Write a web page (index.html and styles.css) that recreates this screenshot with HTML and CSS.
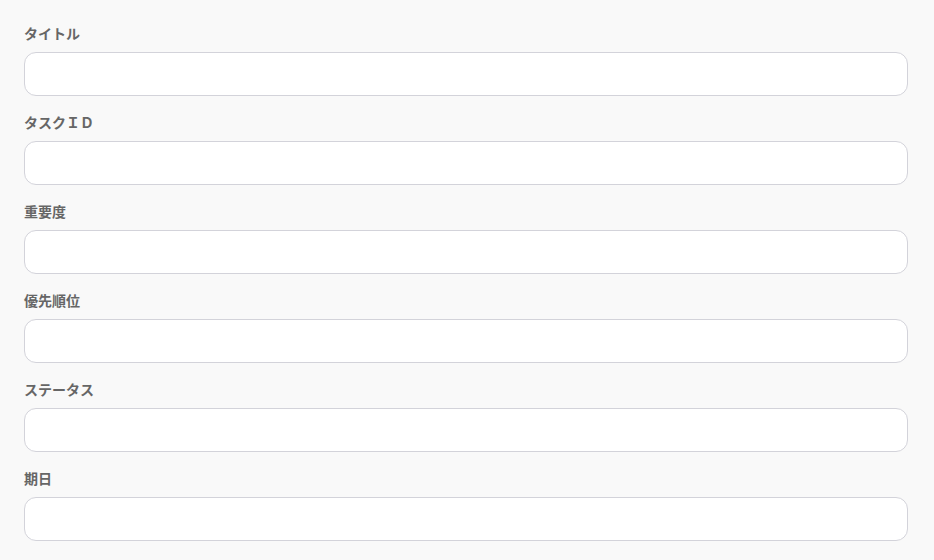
FILE: index.html
```html
<!DOCTYPE html>
<html lang="ja">
<head>
<meta charset="utf-8">
<link rel="stylesheet" href="styles.css">
</head>
<body>
<form class="form">
  <div class="field"><label class="label">タイトル</label><input class="input" type="text"></div>
  <div class="field"><label class="label">タスクＩＤ</label><input class="input" type="text"></div>
  <div class="field"><label class="label">重要度</label><input class="input" type="text"></div>
  <div class="field"><label class="label">優先順位</label><input class="input" type="text"></div>
  <div class="field"><label class="label">ステータス</label><input class="input" type="text"></div>
  <div class="field"><label class="label">期日</label><input class="input" type="text"></div>
</form>
</body>
</html>
```
FILE: styles.css
```css
html, body {
  margin: 0;
  padding: 0;
  background: #f9f9f9;
}
body {
  font-family: "Noto Sans CJK JP", "Noto Sans", sans-serif;
}
.form {
  display: flex;
  flex-direction: column;
  gap: 16px;
  padding: 23px 26px 0 24px;
}
.field {
  display: flex;
  flex-direction: column;
}
.label {
  font-size: 14px;
  font-weight: 700;
  line-height: 20px;
  color: #666;
  margin-bottom: 9px;
}
.input {
  box-sizing: border-box;
  height: 44px;
  width: 100%;
  border: 1px solid #d3d3da;
  border-radius: 12px;
  background: #fff;
  padding: 0 12px;
  font-size: 14px;
  margin: 0;
}
```
